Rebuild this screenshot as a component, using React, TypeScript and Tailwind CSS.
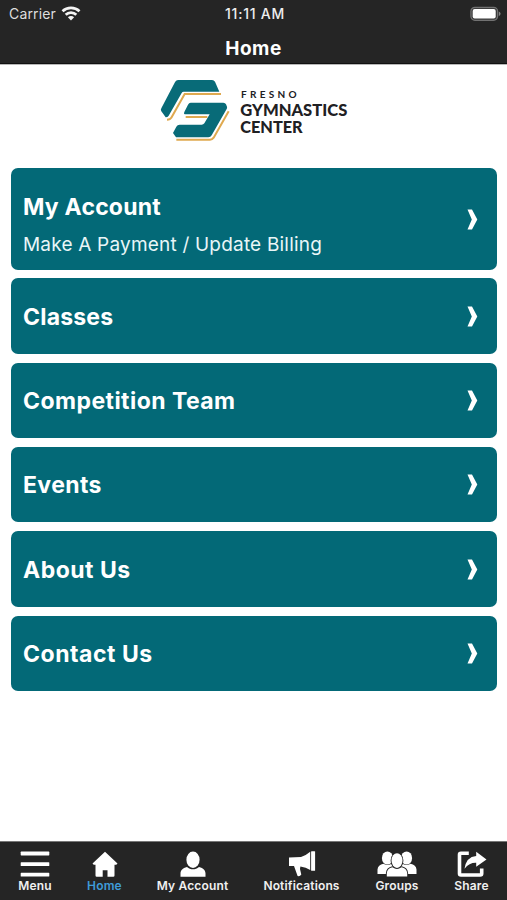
import type { ReactNode } from "react";

const SANS = "font-['Inter','Liberation_Sans',sans-serif]";

function Wifi() {
  return (
    <svg width="20" height="16" viewBox="0 0 20 16" fill="none" stroke="#f4f4f4" strokeWidth="2.7">
      <path d="M1.5 5.2C6.2 0.7 13.8 0.7 18.5 5.2" />
      <path d="M4.7 8.7C7.6 5.8 12.4 5.8 15.3 8.7" />
      <path d="M10 14.4L6.9 11.3C8.7 9.7 11.3 9.7 13.1 11.3Z" fill="#f4f4f4" stroke="none" />
    </svg>
  );
}

function Battery() {
  return (
    <svg width="31" height="16" viewBox="0 0 31 16">
      <rect x="0.9" y="1.3" width="26.7" height="13" rx="4" fill="#3c3c3c" stroke="#727272" strokeWidth="1.2" />
      <rect x="2.7" y="3.1" width="23" height="9.4" rx="2" fill="#fff" />
      <path d="M28.8 5.4Q30.6 6.3 30.6 7.8T28.8 10.2Z" fill="#858585" />
    </svg>
  );
}

function Logo() {
  return (
    <svg width="210" height="80" viewBox="0 0 630 240">
      <g fill="none" stroke="#dfa94f" strokeWidth="6">
        <path d="M213 72H104L64 143Q61 149 51 149" />
        <path d="M107 141H172" />
        <path d="M236 124L191 203Q187 209 180 209H79" />
      </g>
      <g fill="#086b78">
        <path d="M84 30H186Q192 30 195 35L208 65H101Q97 65 95 69L56 137Q53 142 47 142L34 124Q31 120 34 115L74 38Q77 30 84 30Z" />
        <path d="M122 98H220Q226 98 228 103L231 110Q232 114 230 117L185 196Q182 202 175 202H78L69 189L79 170Q82 164 89 164H155Q160 164 163 160L179 133H104Q100 132 103 126L114 104Q117 98 122 98Z" />
      </g>
      <g fill="#202023" fontFamily="Lato, 'Liberation Sans', sans-serif">
        <text x="273" y="84" fontSize="30" fontWeight="700" textLength="167">FRESNO</text>
        <text x="271" y="137" fontSize="48" fontWeight="900" textLength="321" lengthAdjust="spacingAndGlyphs">GYMNASTICS</text>
        <text x="271" y="189" fontSize="48" fontWeight="900" textLength="187" lengthAdjust="spacingAndGlyphs">CENTER</text>
      </g>
    </svg>
  );
}

function Chevron() {
  return (
    <svg width="11" height="21" viewBox="0 0 11 21" fill="#fff">
      <path d="M0.5 0.5H5L10.3 10.5L5 20.5H0.5L4.8 10.5Z" />
    </svg>
  );
}

function Card({ title, sub, tracking = "tracking-[0.2px]" }: { title: string; sub?: string; tracking?: string }) {
  return (
    <button
      className={`flex w-full items-center justify-between rounded-[7px] bg-[#036977] pr-[19px] pl-3 text-left text-white ${sub ? "h-[101.3px] pt-px" : "h-[75.5px]"}`}
    >
      <span className={`flex flex-col ${sub ? "pt-[11px]" : "pt-px"}`}>
        <span className={`block text-[23px] leading-[30px] font-bold whitespace-nowrap ${tracking}`}>{title}</span>
        {sub && (
          <span className="mt-[10px] block text-[19px] leading-[26px] tracking-[0.2px] whitespace-nowrap text-[#e9f6f7]">{sub}</span>
        )}
      </span>
      <Chevron />
    </button>
  );
}

function Tab({ label, box, active, children }: { label: string; box: string; active?: boolean; children: ReactNode }) {
  return (
    <button className={`flex shrink-0 flex-col items-center ${box}`}>
      <span className="flex h-[27px] justify-center">{children}</span>
      <span
        className={`text-[12px] leading-4 font-semibold tracking-[0.15px] whitespace-nowrap ${active ? "text-[#3f9bd8]" : "text-[#f0f0f0]"}`}
      >
        {label}
      </span>
    </button>
  );
}

export default function App() {
  return (
    <div className={`flex h-[900px] w-[507px] flex-col overflow-hidden bg-white ${SANS}`}>
      <header className="flex h-[64px] flex-col border-b border-[#111] bg-[#252525] text-white">
        <div className="grid h-[27px] grid-cols-3 items-center pr-[6px] pl-[9px] text-[14px]">
          <div className="flex items-center gap-[5px] tracking-[0.15px] text-[#dedede]">
            <span>Carrier</span>
            <Wifi />
          </div>
          <div className="text-center font-medium tracking-[0.75px] whitespace-nowrap text-[#eee]">11:11 AM</div>
          <div className="flex justify-end">
            <Battery />
          </div>
        </div>
        <h1 className="pt-[8px] text-center text-[19px] leading-[27px] font-bold tracking-[0.5px]">Home</h1>
      </header>
      <div className="h-px bg-[#b8b8b8]" />

      <main className="flex-1">
        <div className="flex h-[103.3px] pt-[5px] pl-[150px]">
          <Logo />
        </div>
        <div className="flex flex-col gap-[8.8px] pr-[10px] pl-[11px]">
          <Card title="My Account" sub="Make A Payment / Update Billing" />
          <Card title="Classes" />
          <Card title="Competition Team" tracking="tracking-[0.45px]" />
          <Card title="Events" tracking="tracking-[0.4px]" />
          <Card title="About Us" tracking="tracking-[0.5px]" />
          <Card title="Contact Us" tracking="tracking-[0.52px]" />
        </div>
      </main>

      <nav className="flex h-[59px] justify-between border-t border-[#777] bg-[#252525] pt-[9px] pr-[18px] pl-[18px]">
        <Tab label="Menu" box="w-[34px]">
          <svg width="30" height="26" viewBox="0 0 30 26" fill="#fff">
            <rect x="0.7" y="0.6" width="28.6" height="3.8" rx="0.6" />
            <rect x="0.7" y="11.2" width="28.6" height="3.8" rx="0.6" />
            <rect x="0.7" y="21.8" width="28.6" height="3.8" rx="0.6" />
          </svg>
        </Tab>
        <Tab label="Home" box="w-[35px]" active>
          <svg width="26" height="26" viewBox="0 0 26 26" fill="#fff">
            <path d="M13 0.8L25.5 12.6L24.3 13.8H22.5V24.6Q22.5 25.8 21.3 25.8H15.5V19.3H10.7V25.8H4.7Q3.5 25.8 3.5 24.6V13.8H1.7L0.5 12.6Z" />
          </svg>
        </Tab>
        <Tab label="My Account" box="w-[71px]">
          <svg width="26" height="26" viewBox="0 0 26 26" fill="#fff">
            <ellipse cx="13" cy="8.7" rx="6.6" ry="8.2" />
            <path d="M0.5 25.8V22.4C0.7 19.2 2.5 17 7 15.9C10.5 19 15.5 19 19 15.9C23.5 17 25.3 19.2 25.5 22.4V25.8Z" />
          </svg>
        </Tab>
        <Tab label="Notifications" box="w-[77px]">
          <svg width="28" height="26" viewBox="0 0 28 26" fill="#fff">
            <path d="M1 6.4L13 6Q18 4.5 22.2 0.8V18.9Q18 16 12.4 15.4L12 18L13.3 23.5Q12 25.6 9.6 25L6 15H1Z" />
            <rect x="23.1" y="0.3" width="4" height="19.5" rx="0.5" />
          </svg>
        </Tab>
        <Tab label="Groups" box="w-[44px]">
          <svg width="40" height="26" viewBox="0 0 40 26" fill="#fff">
            <ellipse cx="10.4" cy="7" rx="5.5" ry="6.6" />
            <ellipse cx="29.6" cy="7" rx="5.5" ry="6.6" />
            <path d="M0.5 23V18.5Q1 13.8 6.5 12.8Q10.5 15.3 14.5 12.8L18 15V23Z" />
            <path d="M39.5 23V18.5Q39 13.8 33.5 12.8Q29.5 15.3 25.5 12.8L22 15V23Z" />
            <g stroke="#252525" strokeWidth="1.8" paintOrder="stroke">
              <path d="M9.8 25.6V22Q10.2 17.4 15.4 16.2Q20 19 24.6 16.2Q29.8 17.4 30.2 22V25.6Z" />
              <ellipse cx="20" cy="9.6" rx="5.5" ry="7.4" />
            </g>
          </svg>
        </Tab>
        <Tab label="Share" box="w-[35px]">
          <svg width="30" height="26" viewBox="0 0 30 26" fill="#fff">
            <path d="M11.8 2.2H4Q2.5 2.2 2.5 3.7V22.5Q2.5 24 4 24H23.2Q24.7 24 24.7 22.5V17.5" fill="none" stroke="#fff" strokeWidth="3.6" />
            <path d="M19.2 0.7L29.5 8.6L19.2 15.8V11.8Q12.5 11.5 7.5 17.7Q9.2 5.7 19.2 4.9Z" />
          </svg>
        </Tab>
      </nav>
    </div>
  );
}
